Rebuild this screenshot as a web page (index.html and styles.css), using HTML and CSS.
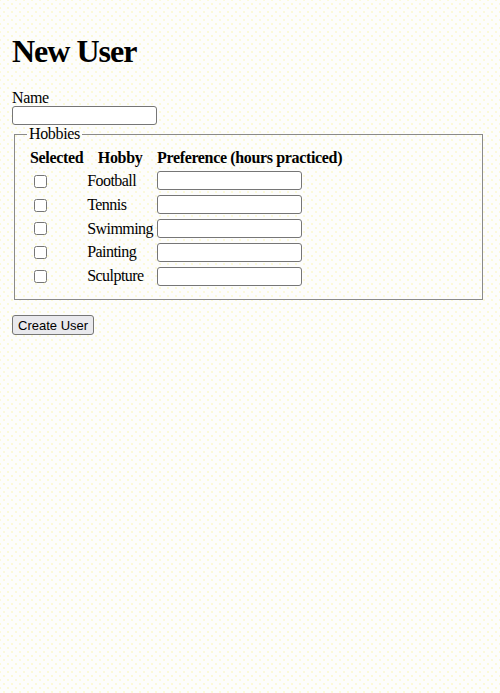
FILE: index.html
```html
<!DOCTYPE html>
<html lang="en">
  <head>
    <meta charset="UTF-8" />
    <meta name="viewport" content="width=device-width, initial-scale=1.0" />
    <title>New User</title>
    <link rel="stylesheet" href="styles.css">
  </head>
  <body>
    <h1>New User</h1>

    <form id="userForm" class="user-form">
      <label for="userName" class="name-label">Name</label>
      <input type="text" id="userName" name="userName" class="field" />

      <fieldset class="hobbies">
        <legend>Hobbies</legend>
        <table class="hobby-table">
          <thead>
            <tr>
              <th>Selected</th>
              <th>Hobby</th>
              <th>Preference (hours practiced)</th>
            </tr>
          </thead>
          <tbody>
            <tr>
              <td><input type="checkbox" name="hobby" value="football" /></td>
              <td>Football</td>
              <td><input type="text" class="field" name="hours_football" /></td>
            </tr>
            <tr>
              <td><input type="checkbox" name="hobby" value="tennis" /></td>
              <td>Tennis</td>
              <td><input type="text" class="field" name="hours_tennis" /></td>
            </tr>
            <tr>
              <td><input type="checkbox" name="hobby" value="swimming" /></td>
              <td>Swimming</td>
              <td><input type="text" class="field" name="hours_swimming" /></td>
            </tr>
            <tr>
              <td><input type="checkbox" name="hobby" value="painting" /></td>
              <td>Painting</td>
              <td><input type="text" class="field" name="hours_painting" /></td>
            </tr>
            <tr>
              <td><input type="checkbox" name="hobby" value="sculpture" /></td>
              <td>Sculpture</td>
              <td><input type="text" class="field" name="hours_sculpture" /></td>
            </tr>
          </tbody>
        </table>
      </fieldset>

      <button type="submit" class="btn">Create User</button>
    </form>
  </body>
</html>
```

FILE: styles.css
```css
/* Plain browser-like form page */
body {
  margin: 12px 17px 12px 12px;
  font-family: "Liberation Serif", "Times New Roman", serif;
  font-size: 16px;
  letter-spacing: -0.35px;
  color: #000;
  background-color: #fdfdfc;
  background-image:
    radial-gradient(circle, #f8f4b0 0.6px, transparent 0.8px),
    radial-gradient(circle, #f8f4b0 0.6px, transparent 0.8px);
  background-size: 8px 8px, 8px 8px;
  background-position: 0 0, 4px 4px;
}

h1 {
  font-size: 32px;
  letter-spacing: -1px;
  margin: 21px 0 19px;
}

.name-label {
  display: block;
  line-height: 17px;
}

.field {
  box-sizing: border-box;
  width: 145px;
  height: 19px;
  margin: 0;
  padding: 1px 2px;
  border: 1px solid #767676;
  border-radius: 3px;
  background-color: #fff;
  font-family: "Liberation Sans", Arial, sans-serif;
  font-size: 13px;
  letter-spacing: 0;
}

.user-form > .field {
  display: block;
}

.hobbies {
  margin: 0 0 0 2px;
  padding: 3px 12px 10px;
  border: 1px solid #8a8a8a;
}

.hobbies legend {
  padding: 0 2px;
}

.hobby-table {
  border-spacing: 2px;
}

.hobby-table th {
  padding: 1px;
  line-height: 18px;
}

.hobby-table td {
  padding: 1px;
  height: 19.3px;
  letter-spacing: -0.55px;
}

.hobby-table input[type="checkbox"] {
  margin: 3px 3px 3px 4px;
  vertical-align: middle;
}

.btn {
  margin-top: 15px;
  height: 20px;
  padding: 0 5px;
  font-family: "Liberation Sans", Arial, sans-serif;
  font-size: 13px;
  letter-spacing: 0;
  color: #000;
  background-color: #e9e9ed;
  border: 1px solid #767676;
  border-radius: 3px;
}
```
